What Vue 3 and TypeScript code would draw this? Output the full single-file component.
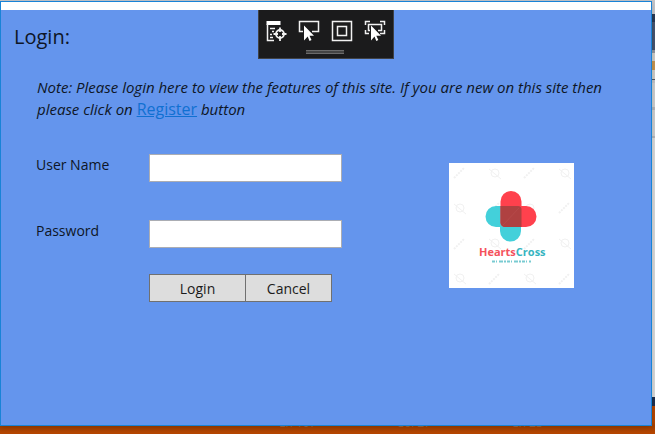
<script setup lang="ts">
import { ref } from 'vue'

const userName = ref('')
const password = ref('')
const caret = ['Ln 107', 'Col 27', 'Ch 23']

function cancel(): void {
  userName.value = ''
  password.value = ''
}
</script>

<template>
  <div class="desktop">
    <div class="workspace">
      <main class="window">
        <div class="titlebar"></div>

        <div class="debugbar">
          <div class="tools">
            <button type="button" aria-label="Go to live visual tree">
              <svg viewBox="0 0 22 22" width="22" height="22" fill="none" stroke="#f1f1f1">
                <path d="M1.500 1h14v4h-14z" fill="#fff" stroke="none" />
                <path d="M2.500 4v16.500H9M5 8.500h5M7 11.500h2M5 14.500h2M5 17.500h3" stroke-width="1.500" />
                <circle cx="15" cy="14" r="4" stroke-width="1.800" />
                <path d="M15 7.500v4.500M15 16v5M8.500 14H13M17 14h4.500" stroke-width="1.800" />
              </svg>
            </button>
            <button type="button" aria-label="Select element">
              <svg viewBox="0 0 22 22" width="22" height="22" fill="none" stroke="#f1f1f1">
                <path d="M5 11.500H1.500v-10h19v10H14" stroke-width="1.500" />
                <path d="M6 5.500v15l3.700-4 1.800 4.500 2-1-2-4.300H16z" fill="#fff" stroke="none" />
              </svg>
            </button>
            <button type="button" aria-label="Display layout adorners">
              <svg viewBox="0 0 22 22" width="22" height="22" fill="none" stroke="#f1f1f1" stroke-width="1.500">
                <path d="M1.500 1.500h19v19h-19zM6.500 6.500h9v9h-9z" />
              </svg>
            </button>
            <button type="button" aria-label="Track focused element">
              <svg viewBox="0 0 22 22" width="22" height="22" fill="none" stroke="#f1f1f1">
                <path d="M1.500 5V1.500H6M16 1.500h4.500V5M20.500 10v3.500H16M1.500 10v3.500H5" stroke-width="1.500" />
                <path d="M6 10.500H4.500v-6h13v6H14" stroke-width="1.500" />
                <path d="M7 5.500v15l3.500-4 1.800 4.500 2-1-2-4.300H17z" fill="#fff" stroke="none" />
              </svg>
            </button>
          </div>
          <div class="grip"></div>
        </div>

        <section class="page">
          <h1>Login:</h1>
          <p class="note">
            Note: Please login here to view the features of this site. If you are new on this site then
            please click on <a href="#register">Register</a> button
          </p>

          <div class="body">
            <form class="form" @submit.prevent>
              <label for="user">User Name</label>
              <input id="user" v-model="userName" type="text" />
              <label for="pass">Password</label>
              <input id="pass" v-model="password" type="password" />
              <div class="actions">
                <button type="submit" class="login">Login</button>
                <button type="button" class="cancel" @click="cancel">Cancel</button>
              </div>
            </form>

            <svg class="logo" viewBox="0 0 125 125" role="img" aria-label="HeartsCross">
              <rect width="125" height="125" fill="#fff" />
              <g fill="none" stroke="#f1f1f1">
                <path d="M5 15l10-10M75 15l10-10M40 50l10-10M110 50l10-10M5 86l10-10M75 86l10-10M40 121l10-10M110 121l10-10" stroke-width="2" stroke-dasharray="2 1" />
                <g>
                  <circle cx="46" cy="10" r="4" /><circle cx="116" cy="10" r="4" />
                  <circle cx="11" cy="45" r="4" /><circle cx="46" cy="80" r="4" />
                  <circle cx="81" cy="45" r="4" /><circle cx="116" cy="80" r="4" />
                  <circle cx="11" cy="115" r="4" /><circle cx="81" cy="115" r="4" />
                </g>
                <path d="M40 6l12 10M110 6l12 10M5 41l12 10M40 76l12 10M110 76l12 10M5 111l12 10M75 111l12 10" />
              </g>
              <path d="M47 43h25v25a10.500 10.500 0 0 1-21 0v-4H47a10.500 10.500 0 0 1 0-21z" fill="#43d0da" />
              <path d="M51.500 38.500a10.500 10.500 0 0 1 21 0V43H77a10.500 10.500 0 0 1 0 21H56a4.500 4.500 0 0 1-4.500-4.500z" fill="#ff414d" />
              <path d="M51.500 43H69a3.500 3.500 0 0 1 3.500 3.500V64H56a4.500 4.500 0 0 1-4.500-4.500z" fill="#af4141" />
              <path d="M54 62l16-17" stroke="#b54a4a" />
              <text x="30" y="93" class="brand"><tspan fill="#f5515c">Hearts</tspan><tspan fill="#36b4bf">Cross</tspan></text>
              <path d="M43 98.500h39" stroke="#79cbd2" stroke-width="2" stroke-dasharray="3 1 1 2 4 1 2 1" />
            </svg>
          </div>
        </section>
      </main>
      <div class="backdrop"></div>
    </div>
    <footer class="status">
      <span v-for="item in caret" :key="item">{{ item }}</span>
    </footer>
  </div>
</template>

<style>
body {
  margin: 0;
}
</style>

<style scoped>
.desktop {
  display: flex;
  flex-direction: column;
  min-height: 100vh;
  background: #c5c6ca;
  font-family: "Open Sans", "Noto Sans", sans-serif;
  color: #0e1626;
}
.workspace {
  flex: 1;
  display: flex;
  z-index: 1;
}
.window {
  position: relative;
  flex: 1;
  display: flex;
  flex-direction: column;
  margin-top: 1px;
  border: 1px solid #1883d7;
  background: #6495ed;
  box-shadow: 0 2px 6px rgba(0, 0, 0, 0.2);
}
.titlebar {
  height: 8px;
  background: #fff;
}
.debugbar {
  position: absolute;
  top: 8px;
  left: 50%;
  transform: translateX(-50%);
  box-sizing: border-box;
  width: 136px;
  height: 49px;
  padding: 10px 2px 0 0;
  border: 1px solid #3f4247;
  border-top: 0;
  background: #1b1b1c;
}
.tools {
  display: flex;
  justify-content: center;
  gap: 11px;
}
.tools button {
  display: flex;
  padding: 0;
  border: 0;
  background: none;
}
.grip {
  box-sizing: border-box;
  width: 38px;
  height: 4px;
  margin: 8px auto 0;
  border: solid #6b6b6b;
  border-width: 1px 0;
  background: #444;
}
.page {
  padding: 12px 36px 0 13px;
}
h1 {
  margin: 0;
  font-size: 20px;
  line-height: 30px;
  font-weight: 400;
}
.note {
  margin: 24px 0 0 23px;
  font-size: 15px;
  line-height: 22px;
  font-style: italic;
}
.note a {
  color: #1070d2;
  font-size: 16px;
  line-height: 20px;
  font-style: normal;
}
.body {
  display: flex;
  justify-content: space-between;
  align-items: flex-start;
  margin: 34px 41px 0 22px;
}
.form {
  display: grid;
  grid-template-columns: 113px 193px;
  row-gap: 38px;
}
.form label {
  font-size: 14px;
  line-height: 22px;
}
.form input {
  box-sizing: border-box;
  width: 100%;
  height: 28px;
  padding: 0 4px;
  border: 1px solid #abadb3;
  border-radius: 0;
  background: #fff;
  font: inherit;
  font-size: 14px;
}
.actions {
  grid-column: 2;
  display: flex;
  margin-top: -12px;
}
.actions button {
  box-sizing: border-box;
  height: 28px;
  padding: 0;
  border: 1px solid #707070;
  background: #ddd;
  color: #1b1b1b;
  font: inherit;
  font-size: 14px;
}
.actions .login {
  width: 97px;
}
.actions .cancel {
  width: 87px;
  margin-left: -1px;
}
.logo {
  width: 125px;
  height: 125px;
  margin-top: 9px;
}
.brand {
  font: 700 11px "Open Sans", sans-serif;
}
.backdrop {
  width: 3px;
  margin-bottom: 20px;
  background: linear-gradient(
    #c5c6ca 14px, #293955 14px 22px, #46546f 22px 50px, #8f949e 50px 53px,
    #d0cdc8 53px 61px, #c69552 61px 70px, #d0cdc8 70px 79px, #555b68 79px 80px,
    #c3c4c8 80px 83px, #cfcfcf 83px 107px, #b5b6ba 107px 110px, #cfcfcf 110px 136px,
    #b5b6ba 136px 138px, #dadada 138px 397px, #1f2f4d 397px
  );
}
.status {
  display: flex;
  justify-content: flex-end;
  gap: 80px;
  box-sizing: border-box;
  height: 28px;
  margin-top: -20px;
  padding-right: 112px;
  background: linear-gradient(#b54600 16px, #a44000 20px, #b54600 26px);
  color: #a7693f;
  font-size: 12px;
  line-height: 34px;
}
</style>
